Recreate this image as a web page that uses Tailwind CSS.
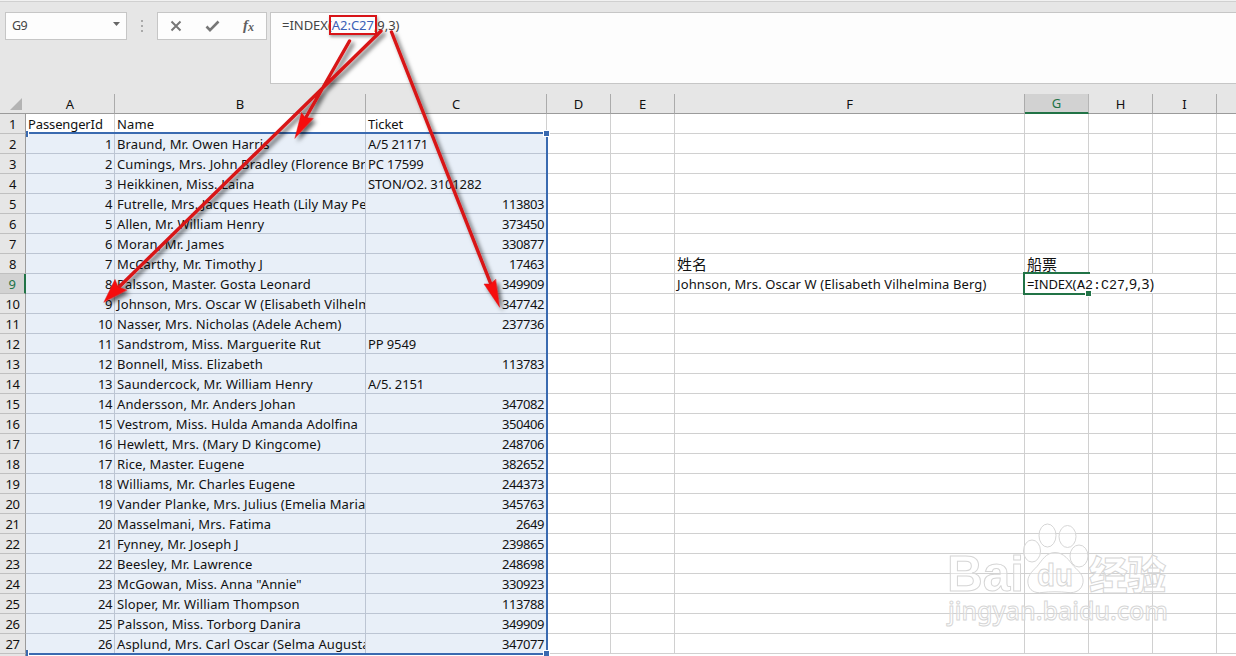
<!DOCTYPE html>
<html lang="zh-CN">
  <head>
    <meta charset="UTF-8" />
    <title>Excel INDEX</title>
    <script src="https://cdn.jsdelivr.net/npm/@tailwindcss/browser@4"></script>
  </head>
  <body class="relative flex h-[656px] w-[1236px] flex-col overflow-hidden bg-[#e6e6e6] font-['Noto_Sans','Noto_Sans_CJK_SC',sans-serif] text-[13px] text-[#111]">
    <!-- formula bar -->
    <header class="flex h-[94px] shrink-0 items-start border-t border-[#f1f1f1]">
      <div class="flex h-full w-full items-start border-t border-[#d0d0d0] pt-[10px] pl-[5px]">
        <div class="flex h-7 w-[122px] items-center justify-between border border-[#c6c6c6] bg-[#fdfdfd] pr-1.5 pl-1.5 text-[#444]">
          <span class="pt-px text-[12.5px] tracking-[-0.6px]">G9</span>
          <svg class="-mt-1 h-1 w-[7px]" viewBox="0 0 7 4"><path d="M0 0h7L3.5 4z" fill="#666" /></svg>
        </div>
        <div class="flex h-7 w-[30px] flex-col items-center justify-center gap-[3px]">
          <i class="size-[2px] bg-[#aaa]"></i>
          <i class="size-[2px] bg-[#aaa]"></i>
          <i class="size-[2px] bg-[#aaa]"></i>
        </div>
        <div class="flex h-7 w-[110px] items-center border border-[#c6c6c6] bg-[#fdfdfd]">
          <svg class="h-[26px] w-[108px]" viewBox="0 0 108 26" fill="none" stroke="#777">
            <path d="M13.5 8.5L22.5 17.5M22.5 8.5L13.5 17.5" stroke-width="2" />
            <path d="M48.5 13.5L52 17.2L60.5 8.5" stroke-width="2.6" />
            <text x="85" y="17" fill="#606060" stroke="none" class="font-['Liberation_Serif',serif] text-[15px] font-bold italic">f</text>
            <text x="90" y="18" fill="#606060" stroke="none" class="font-['Liberation_Serif',serif] text-[12px] font-bold italic">x</text>
          </svg>
        </div>
        <div class="ml-[3px] h-[72px] flex-1 border border-r-0 border-[#c6c6c6] bg-[#fdfdfd] pt-[3px] pl-[11px] leading-[18px] tracking-[-0.03px] whitespace-nowrap text-[#444]">=INDEX(<span class="text-[#3b5fb5]">A2:C27</span>,9,3)</div>
      </div>
    </header>

    <!-- sheet -->
    <table class="w-[1236px] shrink-0 table-fixed border-separate border-spacing-0 bg-white">
      <colgroup>
        <col class="w-[26px]" />
        <col class="w-[89px]" />
        <col class="w-[251px]" />
        <col class="w-[181px]" />
        <col class="w-[64px]" />
        <col class="w-[64px]" />
        <col class="w-[350px]" />
        <col class="w-[64px]" />
        <col class="w-[64px]" />
        <col class="w-[64px]" />
        <col class="w-[19px]" />
      </colgroup>
      <thead><tr id="letters"></tr></thead>
      <tbody id="rows"></tbody>
    </table>

    <!-- referenced range A2:C27 -->
    <div class="absolute top-[132px] left-[26px] h-[523px] w-[522px] border-y-2 border-r-2 border-[#3a6ab0]">
      <i class="absolute -top-[3px] left-0 h-[6px] w-[3px] border-r border-white bg-[#3a6ab0]"></i>
      <i class="absolute -top-[4px] -right-[4px] size-[7px] border border-white bg-[#3a6ab0]"></i>
      <i class="absolute -bottom-[3px] left-0 h-[6px] w-[3px] border-r border-white bg-[#3a6ab0]"></i>
      <i class="absolute -right-[4px] -bottom-[4px] size-[7px] border border-white bg-[#3a6ab0]"></i>
    </div>

    <!-- cell in edit mode -->
    <div class="absolute top-[272px] left-[1023px] flex h-[23px] w-[134px] items-center">
      <div class="absolute inset-y-0 left-0 w-[67px] border-y-2 border-l-2 border-[#217346] bg-white"></div>
      <div class="absolute top-[2px] left-[2px] h-[19px] w-[132px] bg-white"></div>
      <i class="absolute right-[66px] bottom-[-1px] size-[5px] bg-[#217346] outline outline-white"></i>
      <span class="relative ml-[4px] flex items-baseline pt-[2px] whitespace-nowrap"><span class="w-[50px] tracking-[-0.1px]">=INDEX(</span><span class="w-[48px] font-['Liberation_Mono',monospace] text-[13.33px]">A2:C27</span><span class="text-[14px] tracking-[0.3px]">,9,3)</span></span>
    </div>

    <!-- watermark -->
    <svg class="absolute top-[518px] left-[940px]" width="240" height="120" viewBox="0 0 240 120" fill="#fff" fill-opacity="0.4" stroke="#d6d6d6" stroke-width="1">
      <text x="7" y="73" textLength="77" lengthAdjust="spacingAndGlyphs" class="font-['Liberation_Sans',sans-serif] text-[50px] font-bold">Bai</text>
      <ellipse cx="107.500" cy="17.500" rx="8.500" ry="11.500" />
      <ellipse cx="127.500" cy="18.500" rx="8.500" ry="11" />
      <ellipse cx="92" cy="33" rx="8.500" ry="11" />
      <ellipse cx="139" cy="38" rx="9" ry="11" />
      <path d="M115 34.500c-9 0-13 8-18 14-6 6-10 10-9 17 1 7 7 10 14 9 8-1 18-1 26 0 8 1 14-3 15-10 1-7-4-11-9-16-5-6-10-14-19-14z" />
      <text x="97" y="68" textLength="36" lengthAdjust="spacingAndGlyphs" class="font-['Liberation_Sans',sans-serif] text-[31px] font-bold">du</text>
      <text x="149" y="71" textLength="77" lengthAdjust="spacingAndGlyphs" class="font-['Noto_Sans_CJK_SC',sans-serif] text-[39px] font-black">经验</text>
      <text x="8" y="102" textLength="220" lengthAdjust="spacingAndGlyphs" class="font-['Noto_Sans',sans-serif] text-[26px] font-medium">jingyan.baidu.com</text>
    </svg>

    <!-- red annotations -->
    <div class="absolute top-[15px] left-[329px] h-[20px] w-[48px] border-2 border-[#d81418] shadow-[1px_2px_3px_rgba(0,0,0,0.35)]"></div>
    <svg class="absolute top-0 left-0" width="560" height="330" viewBox="0 0 560 330" fill="#f60808" stroke="#d81418" stroke-linecap="round">
      <defs>
        <filter id="shadow" filterUnits="userSpaceOnUse" x="0" y="0" width="560" height="330">
          <feDropShadow dx="3" dy="3" stdDeviation="2" flood-color="#000" flood-opacity="0.6" />
        </filter>
      </defs>
      <g filter="url(#shadow)">
        <path d="M349.500 41L305 119M381 31L118 288M391.500 32L492 287" stroke-width="3.400" />
        <path d="M295 138L301.500 112.500L305 117.500L313 118.500ZM104 302L115 279.500L118 287L126.500 290ZM499.500 307L484 284L490.500 284L495.500 279.500Z" stroke-width="0.500" />
      </g>
    </svg>

    <script>
      const letters = ["A", "B", "C", "D", "E", "F", "G", "H", "I", ""];

      // [PassengerId, Name, Ticket]
      const data = [
        ["PassengerId", "Name", "Ticket"],
        [1, "Braund, Mr. Owen Harris", "A/5 21171"],
        [2, "Cumings, Mrs. John Bradley (Florence Briggs Thayer)", "PC 17599"],
        [3, "Heikkinen, Miss. Laina", "STON/O2. 3101282"],
        [4, "Futrelle, Mrs. Jacques Heath (Lily May Peel)", 113803],
        [5, "Allen, Mr. William Henry", 373450],
        [6, "Moran, Mr. James", 330877],
        [7, "McCarthy, Mr. Timothy J", 17463],
        [8, "Palsson, Master. Gosta Leonard", 349909],
        [9, "Johnson, Mrs. Oscar W (Elisabeth Vilhelmina Berg)", 347742],
        [10, "Nasser, Mrs. Nicholas (Adele Achem)", 237736],
        [11, "Sandstrom, Miss. Marguerite Rut", "PP 9549"],
        [12, "Bonnell, Miss. Elizabeth", 113783],
        [13, "Saundercock, Mr. William Henry", "A/5. 2151"],
        [14, "Andersson, Mr. Anders Johan", 347082],
        [15, "Vestrom, Miss. Hulda Amanda Adolfina", 350406],
        [16, "Hewlett, Mrs. (Mary D Kingcome)", 248706],
        [17, "Rice, Master. Eugene", 382652],
        [18, "Williams, Mr. Charles Eugene", 244373],
        [19, "Vander Planke, Mrs. Julius (Emelia Maria Vandemoortele)", 345763],
        [20, "Masselmani, Mrs. Fatima", 2649],
        [21, "Fynney, Mr. Joseph J", 239865],
        [22, "Beesley, Mr. Lawrence", 248698],
        [23, 'McGowan, Miss. Anna "Annie"', 330923],
        [24, "Sloper, Mr. William Thompson", 113788],
        [25, "Palsson, Miss. Torborg Danira", 349909],
        [26, "Asplund, Mrs. Carl Oscar (Selma Augusta Emilia Johnson)", 347077],
      ];

      // column letters
      const head = document.getElementById("letters");
      head.innerHTML = `<th class="h-5 border-b border-[#9b9b9b] bg-[#e6e6e6] p-0"><svg class="ml-[10px] h-3 w-3" viewBox="0 0 12 12"><path d="M12 0v12H0z" fill="#b3b3b3" /></svg></th>`;
      letters.forEach((letter) => {
        const color =
          letter === "G"
            ? "border-r border-b-2 border-[#217346] border-r-[#b5b5b5] bg-[#d2d2d2] text-[#217346]"
            : letter
              ? "border-r border-b border-[#9b9b9b] border-r-[#ababab] bg-[#e6e6e6]"
              : "border-b border-[#9b9b9b] bg-[#e6e6e6]";
        head.innerHTML += `<th class="h-5 p-0 text-center font-normal leading-[18px] ${color}">${letter}</th>`;
      });

      // rows
      const tbody = document.getElementById("rows");
      data.forEach((row, i) => {
        const n = i + 1;
        const extra = { F8: "姓名", G8: "船票", F9: data[9][1] };
        const rowHead =
          n === 9
            ? "border-r-2 border-r-[#217346] bg-[#d2d2d2] text-[#217346]"
            : "border-r border-r-[#9b9b9b] bg-[#e6e6e6]";
        let html = `<th class="h-5 border-b border-b-[#c0c0c0] p-0 text-center font-normal leading-[18px] tracking-[-0.4px] ${rowHead}">${n}</th>`;
        letters.forEach((letter, c) => {
          const value = row[c] ?? extra[letter + n] ?? "";
          let align = "text-left tracking-[0.11px]";
          if (typeof value === "number") align = "text-right tracking-[-0.43px]";
          else if (c === 0 || c === 2) align = "text-left tracking-[-0.12px]";
          const fill = c < 3 && n > 1 ? "border-[#bcc5d3] bg-[#e8eff8]" : "border-[#d0d0d0]";
          const cjk = letter + n === "F8" || letter + n === "G8" ? "text-[15px]" : "";
          const edge = letter ? "border-r" : "";
          html += `<td class="h-5 overflow-hidden border-b py-0 pt-px pr-[2px] pl-[2px] leading-[18px] whitespace-nowrap ${edge} ${align} ${fill} ${cjk}">${value}</td>`;
        });
        const tr = document.createElement("tr");
        tr.innerHTML = html;
        tbody.appendChild(tr);
      });
      // last rule under row 27
      tbody.innerHTML += `<tr><th class="h-5 border-r border-[#9b9b9b] bg-[#e6e6e6]"></th></tr>`;
    </script>
  </body>
</html>
